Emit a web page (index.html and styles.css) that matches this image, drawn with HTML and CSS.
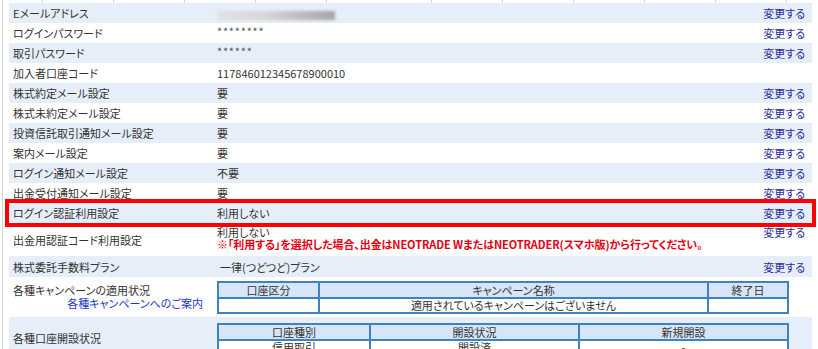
FILE: index.html
```html
<!DOCTYPE html>
<html lang="ja">
<head>
<meta charset="UTF-8">
<title>お客様情報</title>
<link rel="stylesheet" href="styles.css">
</head>
<body>
<div class="page">
  <div class="ruler"></div>
  <div class="list">
    <div class="row alt">
      <div class="label">Eメールアドレス</div>
      <div class="value"><span class="masked"></span></div>
      <div class="action"><a href="#">変更する</a></div>
    </div>
    <div class="row">
      <div class="label">ログインパスワード</div>
      <div class="value stars">********</div>
      <div class="action"><a href="#">変更する</a></div>
    </div>
    <div class="row alt">
      <div class="label">取引パスワード</div>
      <div class="value stars">******</div>
      <div class="action"><a href="#">変更する</a></div>
    </div>
    <div class="row">
      <div class="label">加入者口座コード</div>
      <div class="value">117846012345678900010</div>
      <div class="action"></div>
    </div>
    <div class="row alt">
      <div class="label">株式約定メール設定</div>
      <div class="value">要</div>
      <div class="action"><a href="#">変更する</a></div>
    </div>
    <div class="row">
      <div class="label">株式未約定メール設定</div>
      <div class="value">要</div>
      <div class="action"><a href="#">変更する</a></div>
    </div>
    <div class="row alt">
      <div class="label">投資信託取引通知メール設定</div>
      <div class="value">要</div>
      <div class="action"><a href="#">変更する</a></div>
    </div>
    <div class="row">
      <div class="label">案内メール設定</div>
      <div class="value">要</div>
      <div class="action"><a href="#">変更する</a></div>
    </div>
    <div class="row alt">
      <div class="label">ログイン通知メール設定</div>
      <div class="value">不要</div>
      <div class="action"><a href="#">変更する</a></div>
    </div>
    <div class="row">
      <div class="label">出金受付通知メール設定</div>
      <div class="value">要</div>
      <div class="action"><a href="#">変更する</a></div>
    </div>
    <div class="row alt marked">
      <div class="label">ログイン認証利用設定</div>
      <div class="value">利用しない</div>
      <div class="action"><a href="#">変更する</a></div>
    </div>
    <div class="row tall">
      <div class="label">出金用認証コード利用設定</div>
      <div class="value top">利用しない<br><span class="notice">※「利用する」を選択した場合、出金はNEOTRADE WまたはNEOTRADER(スマホ版)から行ってください。</span></div>
      <div class="action top"><a href="#">変更する</a></div>
    </div>
    <div class="row alt plan">
      <div class="label">株式委託手数料プラン</div>
      <div class="value">一律(つどつど)プラン</div>
      <div class="action"><a href="#">変更する</a></div>
    </div>
    <div class="row campaign">
      <div class="label stacked">各種キャンペーンの適用状況<a class="guide" href="#">各種キャンペーンへのご案内</a></div>
      <div class="value">
        <table class="grid">
          <tr><th class="c-kind">口座区分</th><th>キャンペーン名称</th><th class="c-end">終了日</th></tr>
          <tr><td></td><td>適用されているキャンペーンはございません</td><td></td></tr>
        </table>
      </div>
      <div class="action"></div>
    </div>
    <div class="row alt accounts">
      <div class="label">各種口座開設状況</div>
      <div class="value">
        <table class="grid">
          <tr><th class="c-type">口座種別</th><th class="c-state">開設状況</th><th>新規開設</th></tr>
          <tr><td>信用取引</td><td>開設済</td><td>-</td></tr>
        </table>
      </div>
      <div class="action"></div>
    </div>
  </div>
</div>
</body>
</html>
```

FILE: styles.css
```css
body {
    margin: 0;
    padding: 0;
    background: #fff;
    color: #333;
    font-family: "Noto Sans CJK JP", sans-serif;
    font-size: 11px;
    font-feature-settings: "palt";
}

.page {
    margin-left: 2px;
    border-left: 1px solid #d4d4d4;
    height: 349px;
    overflow: hidden;
}

.ruler {
    height: 3px;
    background:
        repeating-linear-gradient(90deg, transparent 0, transparent 70px, #d8d8d8 70px, #d8d8d8 71px);
    background-position: 358px 0;
}

.list {
    margin: 0 6px 0 6px;
}

.row {
    display: grid;
    grid-template-columns: 206px 1fr auto;
    align-items: center;
    height: 20px;
    line-height: 20px;
}

.row.alt { background: #e6eefa; }

.row.marked {
    outline: 4px solid #f00;
    outline-offset: 0;
    position: relative;
}

.label { padding-left: 4px; white-space: nowrap; }
.value { padding-left: 2px; white-space: nowrap; }
.action { padding-right: 7px; text-align: right; }

.action a {
    color: #2b2b9e;
    text-decoration: none;
}

.stars {
    letter-spacing: 0.8px;
    color: #555;
    position: relative;
    top: -2px;
}

.masked {
    display: inline-block;
    vertical-align: middle;
    width: 118px;
    height: 9px;
    background: linear-gradient(90deg, #e2e2e2 0, #d6d6d6 40%, #bdbdbd 70%, #a5a5a5 100%);
    filter: blur(1.5px);
}

.row.tall { height: 33px; }
.row.tall .top {
    align-self: start;
    line-height: 12px;
    padding-top: 3px;
}

.notice {
    color: #e60012;
    font-weight: bold;
    letter-spacing: -0.1px;
}

.row.plan { height: 21px; }
.row.plan .value { padding-left: 5px; }

.row.campaign {
    height: 40px;
    line-height: 13px;
}

.stacked { white-space: normal; }

.guide {
    display: block;
    text-align: right;
    padding-right: 12px;
    color: #1f35c8;
    text-decoration: none;
}

.row.accounts {
    height: auto;
    align-items: start;
    line-height: 13px;
    padding-top: 6px;
}
.row.accounts .label { padding-top: 9px; }

.grid {
    width: 572px;
    border: 1px solid #3f82bf;
    border-spacing: 0;
    background: #fff;
    line-height: 13px;
}

.grid th, .grid td {
    border: 1px solid #3f82bf;
    padding: 0;
    text-align: center;
    font-weight: normal;
}

.grid th {
    background: #d6e6f8;
    line-height: 14px;
}

.grid .c-kind { width: 99px; }
.grid .c-end { width: 78px; }
.grid .c-type { width: 150px; }
.grid .c-state { width: 207px; }
```
